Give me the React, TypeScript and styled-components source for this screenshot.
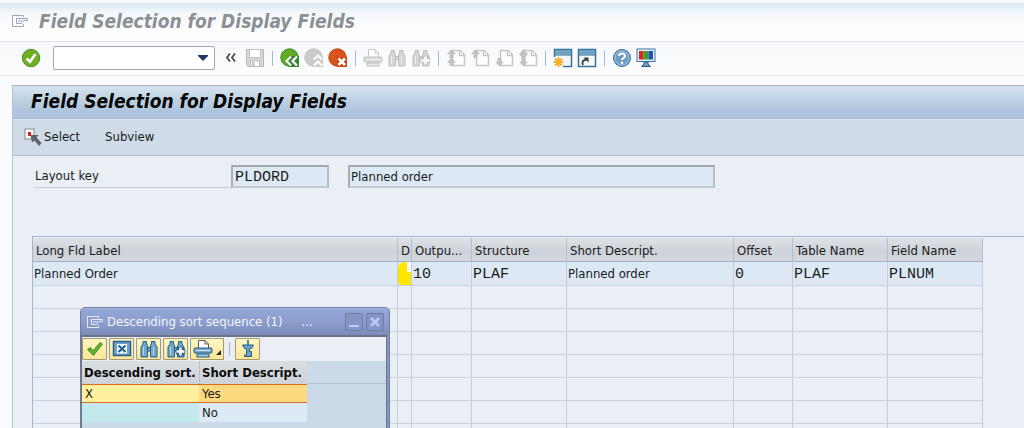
import React from "react";
import styled, { createGlobalStyle } from "styled-components";

const GlobalStyle = createGlobalStyle`
  *, *::before, *::after { box-sizing: border-box; }
  html, body { margin: 0; padding: 0; }
  body {
    background: #fafbfd;
    color: #1a1a1a;
    font-family: "DejaVu Sans Condensed", Tahoma, sans-serif;
    font-size: 13px;
    line-height: 18px;
  }
  button, input { font: inherit; color: inherit; }
`;

const mono = `font-family: "Liberation Mono", "Courier New", monospace; font-size: 15px;`;

/* ---------- window frame ---------- */

const Page = styled.div`
  height: 100vh;
  overflow: hidden;
  display: flex;
  flex-direction: column;
`;

const WindowTitle = styled.header`
  display: flex;
  align-items: center;
  gap: 10px;
  height: 42px;
  flex: none;
  padding: 0 12px 2px;
  border-top: 3px solid #f6f9fc;
  border-bottom: 1px solid #dfe3e9;
  background: linear-gradient(#dbe6f0, #f4f8fb 10px, #fdfdfe 24px);
`;

const Heading = styled.h1<{ $muted?: boolean }>`
  margin: 0;
  font-size: 19px;
  line-height: 24px;
  font-weight: 700;
  font-style: italic;
  white-space: nowrap;
  color: ${(p) => (p.$muted ? "#8b9096" : "#050505")};
`;

const SystemBar = styled.nav`
  display: flex;
  align-items: center;
  gap: 4px;
  height: 34px;
  flex: none;
  padding: 0 21px 1px;
  background: linear-gradient(#f6f8fb, #fdfdfe);
  border-bottom: 1px solid #e6e9f0;
`;

const IconButton = styled.button`
  display: flex;
  align-items: center;
  justify-content: center;
  width: 20px;
  height: 20px;
  flex: none;
  padding: 0;
  border: 0;
  background: none;
`;

const Separator = styled.span`
  width: 1px;
  height: 15px;
  margin: 0 3px;
  flex: none;
  background: #9dbbd8;
`;

const CommandBox = styled.div`
  display: flex;
  width: 162px;
  height: 24px;
  flex: none;
  margin: 0 2px 0 8px;
  background: #fff;
  border: 1px solid #a2a6ac;
  border-radius: 2px;
`;

const CommandInput = styled.input`
  flex: 1;
  min-width: 0;
  border: 0;
  outline: 0;
  padding: 0 4px;
  background: none;
`;

/* ---------- main screen ---------- */

const Screen = styled.main`
  flex: 1;
  min-height: 0;
  display: flex;
  flex-direction: column;
  margin: 9px 0 0 12px;
  border-left: 1px solid #b3c4d8;
  background: #e9eff4;
`;

const ScreenTitle = styled.div`
  display: flex;
  align-items: center;
  height: 34px;
  flex: none;
  padding: 0 18px 2px;
  border-top: 1px solid #a9b6c6;
  border-bottom: 1px solid #a6b7cc;
  background: linear-gradient(#d6e4ef, #bdd1e2 45%, #adc4dc 80%);
`;

const AppBar = styled.div`
  display: flex;
  align-items: center;
  gap: 25px;
  height: 37px;
  flex: none;
  padding: 0 11px 2px;
  background: #cfdce7;
  border-top: 1px solid #dae5ee;
  border-bottom: 1px solid #adbdd2;
`;

const TextButton = styled.button`
  display: flex;
  align-items: center;
  gap: 2px;
  padding: 0;
  border: 0;
  background: none;
`;

const FormRow = styled.div`
  display: flex;
  align-items: flex-end;
  height: 23px;
  flex: none;
  margin: 9px 0 48px 21px;
`;

const FieldLabel = styled.label`
  width: 197px;
  height: 23px;
  padding: 2px 1px 0;
  border-bottom: 1px solid #c4cbd2;
`;

const Field = styled.input<{ $width: number; $mono?: boolean }>`
  width: ${(p) => p.$width}px;
  height: 23px;
  margin-right: 19px;
  padding: ${(p) => (p.$mono ? "2px 2px 0" : "0 1px")};
  outline: 0;
  background: #dce9f4;
  border: 2px solid;
  border-color: #a3a8ac #b7bdc2 #c3cad0 #a9aeb3;
  ${(p) => (p.$mono ? mono : "")}
`;

const GridFrame = styled.section`
  flex: 1;
  min-height: 0;
  overflow: hidden;
  margin-left: 19px;
  padding-top: 1px;
  border-top: 1px solid #9db8d0;
  border-left: 1px solid #9db8d0;
`;

const Grid = styled.table`
  width: 950px;
  table-layout: fixed;
  border-collapse: separate;
  border-spacing: 0;
`;

const HeadCell = styled.th`
  height: 24px;
  padding: 2px 0 0 3px;
  overflow: hidden;
  text-align: left;
  font-weight: 400;
  white-space: nowrap;
  background: linear-gradient(#dfe2e5, #cdd1d9 60%, #d4d8de);
  border-right: 1px solid #b3bfcd;
  border-bottom: 1px solid #9fb0c4;
`;

const Cell = styled.td<{ $filled?: boolean; $mono?: boolean }>`
  height: 23px;
  padding: ${(p) => (p.$mono ? "2px 0 0 1px" : "0 0 0 1px")};
  overflow: hidden;
  white-space: nowrap;
  background: ${(p) => (p.$filled ? "#dce9f4" : "#e9eff4")};
  border-right: 1px solid #c3cedb;
  border-bottom: 1px solid #c9d1de;
  ${(p) => (p.$mono ? mono : "")}
`;

const MarkCell = styled(Cell)`
  padding: 0;
  svg { display: block; }
`;

/* ---------- dialog ---------- */

const Dialog = styled.div`
  position: absolute;
  left: 80px;
  top: 307px;
  width: 310px;
  height: 180px;
  display: flex;
  flex-direction: column;
  border: 1px solid #717f9f;
  border-radius: 5px 5px 0 0;
  background: #8797c0;
  overflow: hidden;
`;

const DialogTitle = styled.div`
  display: flex;
  align-items: center;
  height: 27px;
  flex: none;
  padding: 0 5px 0 6px;
  gap: 3px;
  color: #f2f5fc;
  border-top: 1px solid #a5b4dc;
  background: linear-gradient(#93a6d8, #8c9ecd 50%, #7b8cb8);
`;

const DialogName = styled.h2`
  margin: 0;
  font-size: 13px;
  line-height: 18px;
  font-weight: 400;
  white-space: nowrap;
`;

const Ellipsis = styled.span`
  flex: 1;
  padding-left: 16px;
`;

const FrameButton = styled.button`
  display: flex;
  align-items: center;
  justify-content: center;
  width: 18px;
  height: 18px;
  flex: none;
  padding: 0;
  background: #8595c3;
  border: 1px solid #6c7ca8;
  border-radius: 2px;
`;

const DialogBody = styled.div`
  flex: 1;
  display: flex;
  flex-direction: column;
  margin: 0 2px 2px 0;
  border: 1px solid #6b7484;
  border-top-width: 2px;
  background: #cbdae8;
`;

const DialogBar = styled.div`
  display: flex;
  align-items: center;
  gap: 2px;
  height: 24px;
  flex: none;
  background: #e9eff4;
`;

const ToolButton = styled.button<{ $width?: number }>`
  display: flex;
  align-items: center;
  justify-content: center;
  width: ${(p) => p.$width ?? 25}px;
  height: 22px;
  flex: none;
  padding: 0;
  background: linear-gradient(#fff6c4, #fde796);
  border: 1px solid #a39a74;
  border-radius: 1px;
`;

const MenuButton = styled(ToolButton)`
  align-items: flex-end;
  margin-left: -3px;
  border-left: 0;
  padding-bottom: 4px;
`;

const BarLine = styled.span`
  width: 1px;
  height: 14px;
  margin: 0 3px;
  background: #adb5bd;
`;

const HitHead = styled.thead`
  th {
    height: 23px;
    padding: 0 0 0 2px;
    text-align: left;
    font-weight: 700;
    white-space: nowrap;
    color: #0c0c0c;
    background: linear-gradient(#dadee2, #ced3d9);
  }
  th + th { border-left: 1px solid #b7c0ca; }
`;

const HitTable = styled.table`
  width: 225px;
  table-layout: fixed;
  border-collapse: separate;
  border-spacing: 0;
`;

const HeadRule = styled.div`
  background: linear-gradient(#cbdae8 22px, #b4c1cf 22px, #b4c1cf 23px, #cbdae8 23px);
  flex: 1;
`;

const HitCell = styled.td<{ $tone: "key" | "active" | "blank" | "plain" }>`
  height: 19px;
  padding: 0 0 0 3px;
  line-height: 16px;
  background: ${(p) =>
    ({ key: "#fff0a0", active: "#fcda80", blank: "#c4e9ec", plain: "#dde9f4" })[p.$tone]};
  border-style: solid;
  border-color: #dc6a20;
  border-width: ${(p) => (p.$tone === "key" || p.$tone === "active" ? "1px 0" : "0")};
`;

/* ---------- icons ---------- */

const Svg = ({ children, w = 20, h = 20 }: { children: React.ReactNode; w?: number; h?: number }) => (
  <svg width={w} height={h} viewBox={`0 0 ${w} ${h}`} fill="none" aria-hidden="true">
    {children}
  </svg>
);

const ExitIcon = ({ color }: { color: string }) => (
  <Svg w={17} h={14}>
    <path d="M11.500 3V1.500H.500V12.500H11.500V10" stroke={color} />
    <path d="M4.500 4.500H15.500V6.500H11.500L9.500 9.500H4.500Z" stroke={color} />
    <path d="M6 7H10" stroke={color} />
  </Svg>
);

const OkIcon = () => (
  <Svg>
    <circle cx="10" cy="10" r="8.700" fill="#6fb023" stroke="#4c8f2c" />
    <path d="M5.500 10.500L9 13.800L14.500 6" stroke="#fff" strokeWidth="2.600" />
  </Svg>
);

const DoubleLeftIcon = () => (
  <Svg>
    <path d="M9 5.500L6 9.500L9 13.500M14 5.500L11 9.500L14 13.500" stroke="#4a4a4a" strokeWidth="1.800" />
  </Svg>
);

const SaveIcon = () => (
  <Svg>
    <path d="M1.500 1.500H18.500V18.500H3L1.500 17Z" fill="#d6d6d6" stroke="#b9b9b9" />
    <rect x="4.500" y="1.500" width="11" height="8" fill="#fff" stroke="#c4c4c4" />
    <rect x="5.500" y="13" width="9" height="5.500" fill="#fff" stroke="#b9b9b9" />
    <rect x="7" y="14" width="2.500" height="4" fill="#c2c2c2" />
  </Svg>
);

const NavIcon = ({ kind }: { kind: "back" | "up" | "cancel" }) => {
  const fill = { back: "#62ab22", up: "#cbcbcb", cancel: "#d9541b" }[kind];
  const edge = { back: "#36852d", up: "#c2c2c2", cancel: "#b94315" }[kind];
  return (
    <Svg>
      <circle cx="9.500" cy="9.500" r="8.700" fill={fill} stroke={edge} />
      {kind === "back" && (
        <>
          <path d="M5 13L9 8H19V19H9Z" fill="#36852d" />
          <path d="M11 8.500L6.500 13L11 17.500M17 8.500L12.500 13L17 17.500" stroke="#fff" strokeWidth="2.200" />
        </>
      )}
      {kind === "up" && (
        <>
          <path d="M9 10L14 5L19 10V19H9Z" fill="#c9c9c9" />
          <path d="M10 11.500L14 7.500L18 11.500M10 17.500L14 13.500L18 17.500" stroke="#fff" strokeWidth="2.200" />
        </>
      )}
      {kind === "cancel" && (
        <>
          <path d="M9 9H19V19H9Z" fill="#cf4614" />
          <path d="M10.500 10.500L17 17M17 10.500L10.500 17" stroke="#fff" strokeWidth="2.600" />
        </>
      )}
    </Svg>
  );
};

const PrintIcon = ({ live = false }: { live?: boolean }) => (
  <Svg>
    <path d="M5.500 9V1.500H12L15.500 5V9" fill="#fff" stroke={live ? "#5a5a5a" : "#c6c6c6"} />
    <path d="M12 1.500V5H15.500" stroke={live ? "#5a5a5a" : "#c6c6c6"} />
    <rect x="1" y="9" width="18" height="5" rx="1" fill={live ? "#78a9cb" : "#dadada"} stroke={live ? "#1f5f88" : "#c0c0c0"} />
    <rect x="4" y="15" width="12" height="3" fill={live ? "#a9cadf" : "#e6e6e6"} stroke={live ? "#1f5f88" : "#c0c0c0"} />
    <path d="M3 11.500H17" stroke={live ? "#cfe2ee" : "#f0f0f0"} />
  </Svg>
);

const FindIcon = ({ live = false, next = false }: { live?: boolean; next?: boolean }) => (
  <Svg>
    <g fill={live ? "#74a8ca" : "#d5d5d5"} stroke={live ? "#1b638f" : "#bfbfbf"}>
      <path d="M4 2.500H7.500V5L8.500 7V18H2V8L4 5Z" />
      <path d="M12.500 2.500H16V5L18 8V18H11.500V7L12.500 5Z" />
      <path d="M8.500 8.500H11.500V12H8.500Z" />
    </g>
    <path d="M4.500 8V16M14.500 8V16" stroke={live ? "#b9d5e6" : "#ececec"} />
    {next && (
      <>
        <circle cx="14.500" cy="12.500" r="5" fill={live ? "#2f6298" : "#c4c4c4"} />
        <path d="M14.500 8.500V16.500M10.500 12.500H18.500" stroke="#fff" strokeWidth="2.400" />
      </>
    )}
  </Svg>
);

const PageIcon = ({ kind }: { kind: "first" | "prev" | "next" | "last" }) => {
  const up = "M1 6L5.500 1L10 6H7.500V10H3.500V6Z";
  const down = "M1 13.500H3.500V10H7.500V13.500H10L5.500 18.500Z";
  return (
    <Svg>
      <path d="M6.500 17.500V2.500H14L18.500 7V17.500Z" fill="#fff" stroke="#c6c6c6" strokeWidth="1.500" />
      <path d="M13.500 2.500V7.500H18.500" stroke="#c6c6c6" strokeWidth="1.500" />
      <g fill="#c2c2c2">
        {kind !== "next" && <path d={up} />}
        {(kind === "next" || kind === "last") && <path d={down} />}
        {kind === "first" && <path d="M1 15L5.500 9L10 15H7.500V18H3.500V15Z" />}
        {kind === "last" && <path d="M3.500 5H7.500V6H10L5.500 11L1 6Z" />}
      </g>
    </Svg>
  );
};

const SessionIcon = ({ shortcut = false }: { shortcut?: boolean }) => (
  <Svg>
    <rect x="1.500" y="1.500" width="17" height="17" fill="#f5f8fa" stroke="#3c7197" strokeWidth="1.500" />
    <rect x="2" y="2" width="16" height="4.500" fill="#6ea3c6" />
    <path d="M2 7H18" stroke="#2f678f" />
    {shortcut ? (
      <>
        <path d="M6 17C4.500 14 6 12 9.500 11.500" stroke="#3a3a3a" strokeWidth="1.800" />
        <path d="M6.500 9.500H11.500V14.500Z" fill="#3a3a3a" />
      </>
    ) : (
      <>
        <rect x="0" y="9" width="10" height="11" fill="#fbfcfd" />
        <path d="M5.500 9V19M.500 14H10.500M2 10.500L9 17.500M9 10.500L2 17.500" stroke="#f09a16" strokeWidth="1.600" />
        <circle cx="5.500" cy="14" r="3" fill="#fbb31c" />
      </>
    )}
  </Svg>
);

const HelpIcon = () => (
  <Svg>
    <circle cx="10" cy="10" r="8.500" fill="#6c9cc2" stroke="#3f749f" />
    <circle cx="10" cy="10" r="7" stroke="#a9c6dc" />
    <path d="M7 8C7 4.500 13 4.500 13 8C13 10 10 10 10 12" stroke="#fff" strokeWidth="2" />
    <circle cx="10" cy="14.700" r="1.300" fill="#fff" />
  </Svg>
);

const LayoutIcon = () => (
  <Svg>
    <rect x="1" y="1" width="18" height="12.500" fill="#e8f1f7" stroke="#3c779f" />
    <rect x="3" y="3" width="4.500" height="8.500" fill="#d82a1b" />
    <rect x="7.500" y="3" width="5" height="8.500" fill="#35a02c" />
    <rect x="12.500" y="3" width="4.500" height="8.500" fill="#2350b5" />
    <path d="M8 14H12V16L14.500 18.500H5.500L8 16Z" fill="#6d9fc2" stroke="#2b6087" />
  </Svg>
);

const SelectIcon = () => (
  <Svg w={18} h={20}>
    <rect x="1" y="2" width="9" height="10" fill="#fff" stroke="#85888c" />
    <rect x="4" y="5" width="3" height="4" fill="#d32020" />
    <path d="M6.500 8H14.500L12.500 10.500L17.500 16L15 19L10.500 13.500L8 15.500Z" fill="#5f6266" />
  </Svg>
);

const CheckIcon = () => (
  <Svg>
    <path d="M2.500 10.500L5.500 8.500L8 12L15 3.500L17.500 5L8.500 16.500Z" fill="#68b22c" stroke="#3f8a2a" />
  </Svg>
);

const CloseBoxIcon = () => (
  <Svg>
    <rect x="1.500" y="2.500" width="17" height="14" fill="#6fa3c7" stroke="#24628d" strokeWidth="1.500" />
    <rect x="5" y="5" width="10" height="9.500" fill="#fff" />
    <path d="M6.500 6.500L13.500 13M13.500 6.500L6.500 13" stroke="#24628d" strokeWidth="2.200" />
  </Svg>
);

const PinIcon = () => (
  <Svg>
    <path d="M10 1V7" stroke="#20628c" strokeWidth="1.500" />
    <path d="M4.500 6H15.500L13.500 9.500H11.500V12.500H13.500V17.500H6.500V16H8.500V9.500H6.500Z" fill="#6ea3c7" stroke="#20628c" />
  </Svg>
);

const Marker = () => (
  <Svg w={13} h={23}>
    <path d="M0 5C1 1 4 0 9 0V9L13 10V23H3L0 21Z" fill="#ffe600" />
    <path d="M9 0H13V10H10L9 8Z" fill="#fff" />
  </Svg>
);

/* ---------- data ---------- */

const columns = [
  { title: "Long Fld Label", width: 365, value: "Planned Order" },
  { title: "D", width: 14, value: null },
  { title: "Outpu...", width: 60, value: "10", mono: true },
  { title: "Structure", width: 95, value: "PLAF", mono: true },
  { title: "Short Descript.", width: 167, value: "Planned order" },
  { title: "Offset", width: 59, value: "0", mono: true },
  { title: "Table Name", width: 95, value: "PLAF", mono: true },
  { title: "Field Name", width: 95, value: "PLNUM", mono: true },
];

const emptyRows = Array.from({ length: 7 }, (_, i) => i);

const Tool = ({ label, children }: { label: string; children: React.ReactNode }) => (
  <IconButton type="button" aria-label={label}>
    {children}
  </IconButton>
);

export default function App() {
  return (
    <Page>
      <GlobalStyle />
      <WindowTitle>
        <ExitIcon color="#9ba5be" />
        <Heading as="div" $muted>Field Selection for Display Fields</Heading>
      </WindowTitle>

      <SystemBar aria-label="System functions">
        <Tool label="Enter"><OkIcon /></Tool>
        <CommandBox>
          <CommandInput aria-label="Command" />
          <Tool label="Command history">
            <Svg>
              <path d="M4 8H14V9L9 14L4 9Z" fill="#1d3767" />
            </Svg>
          </Tool>
        </CommandBox>
        <Tool label="Hide command field"><DoubleLeftIcon /></Tool>
        <Tool label="Save"><SaveIcon /></Tool>
        <Separator />
        <Tool label="Back"><NavIcon kind="back" /></Tool>
        <Tool label="Exit"><NavIcon kind="up" /></Tool>
        <Tool label="Cancel"><NavIcon kind="cancel" /></Tool>
        <Separator />
        <Tool label="Print"><PrintIcon /></Tool>
        <Tool label="Find"><FindIcon /></Tool>
        <Tool label="Find next"><FindIcon next /></Tool>
        <Separator />
        <Tool label="First page"><PageIcon kind="first" /></Tool>
        <Tool label="Previous page"><PageIcon kind="prev" /></Tool>
        <Tool label="Next page"><PageIcon kind="next" /></Tool>
        <Tool label="Last page"><PageIcon kind="last" /></Tool>
        <Separator />
        <Tool label="New session"><SessionIcon /></Tool>
        <Tool label="Create shortcut"><SessionIcon shortcut /></Tool>
        <Separator />
        <Tool label="Help"><HelpIcon /></Tool>
        <Tool label="Customize local layout"><LayoutIcon /></Tool>
      </SystemBar>

      <Screen>
        <ScreenTitle>
          <Heading>Field Selection for Display Fields</Heading>
        </ScreenTitle>
        <AppBar>
          <TextButton type="button"><SelectIcon />Select</TextButton>
          <TextButton type="button">Subview</TextButton>
        </AppBar>

        <FormRow>
          <FieldLabel htmlFor="layout-key">Layout key</FieldLabel>
          <Field id="layout-key" $width={98} $mono readOnly value="PLDORD" />
          <Field aria-label="Layout description" $width={367} readOnly value="Planned order" />
        </FormRow>

        <GridFrame>
          <Grid>
            <colgroup>
              {columns.map((c) => <col key={c.title} width={c.width} />)}
            </colgroup>
            <thead>
              <tr>
                {columns.map((c) => <HeadCell key={c.title} scope="col">{c.title}</HeadCell>)}
              </tr>
            </thead>
            <tbody>
              <tr>
                {columns.map((c) =>
                  c.value === null ? (
                    <MarkCell key={c.title} $filled><Marker /></MarkCell>
                  ) : (
                    <Cell key={c.title} $filled $mono={c.mono}>{c.value}</Cell>
                  )
                )}
              </tr>
              {emptyRows.map((r) => (
                <tr key={r}>
                  {columns.map((c) => <Cell key={c.title} />)}
                </tr>
              ))}
            </tbody>
          </Grid>
        </GridFrame>
      </Screen>

      <Dialog role="dialog" aria-labelledby="dialog-name">
        <DialogTitle>
          <ExitIcon color="#e6ebf7" />
          <DialogName id="dialog-name">Descending sort sequence (1)</DialogName>
          <Ellipsis>...</Ellipsis>
          <FrameButton type="button" aria-label="Minimize">
            <Svg w={12} h={12}><path d="M1 10H11" stroke="#b5cdf5" strokeWidth="2" /></Svg>
          </FrameButton>
          <FrameButton type="button" aria-label="Close">
            <Svg w={12} h={12}><path d="M2 2L10 10M10 2L2 10" stroke="#b5cdf5" strokeWidth="2.600" /></Svg>
          </FrameButton>
        </DialogTitle>
        <DialogBody>
          <DialogBar>
            <ToolButton type="button" aria-label="Copy"><CheckIcon /></ToolButton>
            <ToolButton type="button" aria-label="Close list"><CloseBoxIcon /></ToolButton>
            <ToolButton type="button" aria-label="Find"><FindIcon live /></ToolButton>
            <ToolButton type="button" aria-label="Find next"><FindIcon live next /></ToolButton>
            <ToolButton type="button" aria-label="Print"><PrintIcon live /></ToolButton>
            <MenuButton type="button" aria-label="Print options" $width={10}>
              <Svg w={5} h={5}><path d="M5 0V5H0Z" fill="#2b2b2b" /></Svg>
            </MenuButton>
            <BarLine />
            <ToolButton type="button" aria-label="Hold list"><PinIcon /></ToolButton>
          </DialogBar>
          <HeadRule>
            <HitTable>
              <colgroup>
                <col width={117} />
                <col width={108} />
              </colgroup>
              <HitHead>
                <tr>
                  <th scope="col">Descending sort.</th>
                  <th scope="col">Short Descript.</th>
                </tr>
              </HitHead>
              <tbody>
                <tr>
                  <HitCell $tone="key">X</HitCell>
                  <HitCell $tone="active">Yes</HitCell>
                </tr>
                <tr>
                  <HitCell $tone="blank" />
                  <HitCell $tone="plain">No</HitCell>
                </tr>
              </tbody>
            </HitTable>
          </HeadRule>
        </DialogBody>
      </Dialog>
    </Page>
  );
}
